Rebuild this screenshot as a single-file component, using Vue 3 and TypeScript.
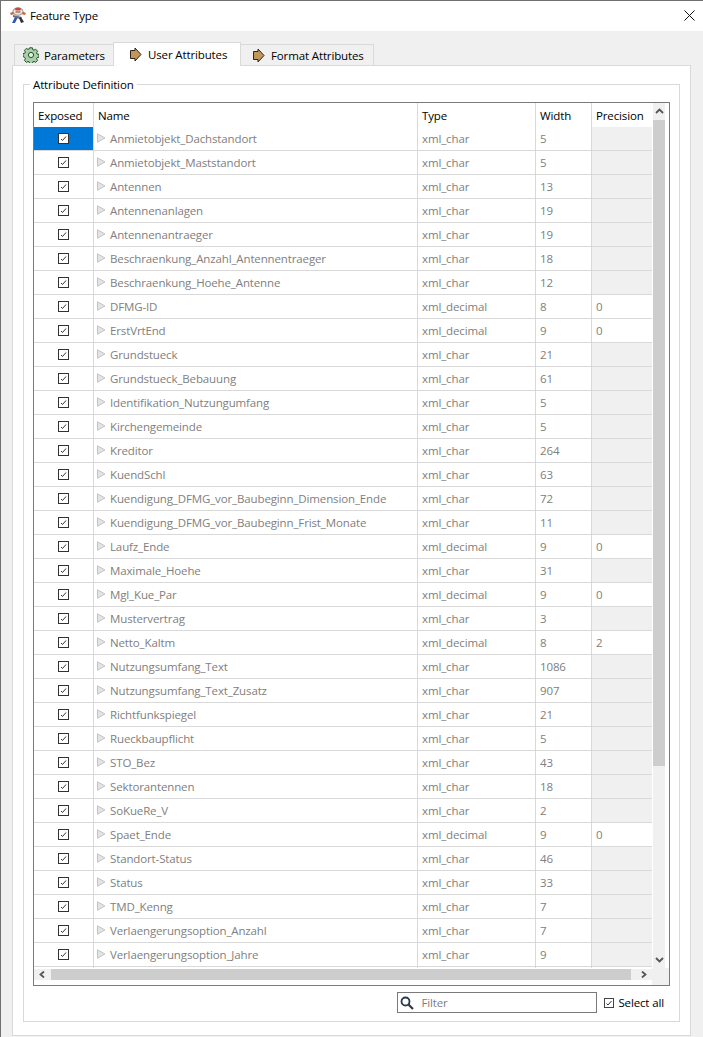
<script setup lang="ts">
interface Attr {
	name: string
	type: 'xml_char' | 'xml_decimal'
	width: number
	precision?: number
}

const rows: Attr[] = [
	{ name: 'Anmietobjekt_Dachstandort', type: 'xml_char', width: 5 },
	{ name: 'Anmietobjekt_Maststandort', type: 'xml_char', width: 5 },
	{ name: 'Antennen', type: 'xml_char', width: 13 },
	{ name: 'Antennenanlagen', type: 'xml_char', width: 19 },
	{ name: 'Antennenantraeger', type: 'xml_char', width: 19 },
	{ name: 'Beschraenkung_Anzahl_Antennentraeger', type: 'xml_char', width: 18 },
	{ name: 'Beschraenkung_Hoehe_Antenne', type: 'xml_char', width: 12 },
	{ name: 'DFMG-ID', type: 'xml_decimal', width: 8, precision: 0 },
	{ name: 'ErstVrtEnd', type: 'xml_decimal', width: 9, precision: 0 },
	{ name: 'Grundstueck', type: 'xml_char', width: 21 },
	{ name: 'Grundstueck_Bebauung', type: 'xml_char', width: 61 },
	{ name: 'Identifikation_Nutzungumfang', type: 'xml_char', width: 5 },
	{ name: 'Kirchengemeinde', type: 'xml_char', width: 5 },
	{ name: 'Kreditor', type: 'xml_char', width: 264 },
	{ name: 'KuendSchl', type: 'xml_char', width: 63 },
	{ name: 'Kuendigung_DFMG_vor_Baubeginn_Dimension_Ende', type: 'xml_char', width: 72 },
	{ name: 'Kuendigung_DFMG_vor_Baubeginn_Frist_Monate', type: 'xml_char', width: 11 },
	{ name: 'Laufz_Ende', type: 'xml_decimal', width: 9, precision: 0 },
	{ name: 'Maximale_Hoehe', type: 'xml_char', width: 31 },
	{ name: 'Mgl_Kue_Par', type: 'xml_decimal', width: 9, precision: 0 },
	{ name: 'Mustervertrag', type: 'xml_char', width: 3 },
	{ name: 'Netto_Kaltm', type: 'xml_decimal', width: 8, precision: 2 },
	{ name: 'Nutzungsumfang_Text', type: 'xml_char', width: 1086 },
	{ name: 'Nutzungsumfang_Text_Zusatz', type: 'xml_char', width: 907 },
	{ name: 'Richtfunkspiegel', type: 'xml_char', width: 21 },
	{ name: 'Rueckbaupflicht', type: 'xml_char', width: 5 },
	{ name: 'STO_Bez', type: 'xml_char', width: 43 },
	{ name: 'Sektorantennen', type: 'xml_char', width: 18 },
	{ name: 'SoKueRe_V', type: 'xml_char', width: 2 },
	{ name: 'Spaet_Ende', type: 'xml_decimal', width: 9, precision: 0 },
	{ name: 'Standort-Status', type: 'xml_char', width: 46 },
	{ name: 'Status', type: 'xml_char', width: 33 },
	{ name: 'TMD_Kenng', type: 'xml_char', width: 7 },
	{ name: 'Verlaengerungsoption_Anzahl', type: 'xml_char', width: 7 },
	{ name: 'Verlaengerungsoption_Jahre', type: 'xml_char', width: 9 },
]
</script>

<template>
	<div class="window">
		<header class="titlebar">
			<svg class="app-icon" width="18" height="18" viewBox="0 0 18 18">
				<path d="M1 7 L6 5 L6 8 L2 9 Z" fill="#d0653a" />
				<path d="M17 7 L12 5 L12 8 L16 9 Z" fill="#d0653a" />
				<ellipse cx="9" cy="5.5" rx="5" ry="3.8" fill="#ece3da" stroke="#8a7468" stroke-width="0.8" />
				<path d="M5.5 3 Q9 0.5 12.5 3 L11 4.5 L7 4.5 Z" fill="#c24a38" />
				<path d="M6.5 6 H11.5" stroke="#6a4a40" stroke-width="1" />
				<path d="M4 9 L13 11 L11 13 L4 11 Z" fill="#6f6f7a" />
				<path d="M6 11 L3 17 L6 17 L8.5 12 Z" fill="#2f55b8" />
				<path d="M10 12 L12 17 L15 16 L12 11 Z" fill="#33333c" />
			</svg>
			<span class="title">Feature Type</span>
			<svg class="close" width="11" height="11" viewBox="0 0 11 11">
				<path d="M0.5 0.5 L10.5 10.5 M10.5 0.5 L0.5 10.5" stroke="#111" stroke-width="1" fill="none" />
			</svg>
		</header>

		<div class="body">
			<nav class="tabs">
				<div class="tab params">
					<svg width="16" height="16" viewBox="0 0 16 16">
						<path
							d="M6.6.8h2.8l.4 1.9 1.2.5 1.6-1 2 2-1 1.6.5 1.2 1.9.4v2.8l-1.9.4-.5 1.2 1 1.6-2 2-1.6-1-1.2.5-.4 1.9H6.6l-.4-1.9-1.2-.5-1.6 1-2-2 1-1.6-.5-1.2L0 9.4V6.6l1.9-.4.5-1.2-1-1.6 2-2 1.6 1 1.2-.5z"
							fill="#a9cfa6"
							stroke="#24502f"
							stroke-width="1"
						/>
						<circle cx="8" cy="8" r="2.6" fill="#e6efe4" stroke="#24502f" stroke-width="1" />
					</svg>
					<span>Parameters</span>
				</div>
				<div class="tab active">
					<svg width="13" height="15" viewBox="0 0 13 15">
						<path d="M1.5 3.5 H6 V1 L12 7.5 L6 14 V11.5 H1.5 Z" fill="#c2955a" stroke="#2d2418" stroke-width="1" />
					</svg>
					<span>User Attributes</span>
				</div>
				<div class="tab format">
					<svg width="13" height="15" viewBox="0 0 13 15">
						<path d="M1.5 3.5 H6 V1 L12 7.5 L6 14 V11.5 H1.5 Z" fill="#c2955a" stroke="#2d2418" stroke-width="1" />
					</svg>
					<span>Format Attributes</span>
				</div>
			</nav>

			<section class="pane">
				<fieldset class="group">
					<legend>Attribute Definition</legend>

					<div class="frame">
						<div class="table-area">
							<div class="row head">
								<div class="cell">Exposed</div>
								<div class="cell">Name</div>
								<div class="cell">Type</div>
								<div class="cell">Width</div>
								<div class="cell last">Precision</div>
							</div>
							<div class="rows">
								<div v-for="(row, i) in rows" :key="row.name" class="row">
									<div class="cell exposed" :class="{ selected: i === 0 }">
										<span class="check">
											<svg width="9" height="9" viewBox="0 0 9 9">
												<path d="M2 5 L3.5 6.5 L7 2.5" stroke="#333" stroke-width="1" fill="none" />
											</svg>
										</span>
									</div>
									<div class="cell name">
										<svg class="arrow" width="9" height="10" viewBox="0 0 9 10">
											<path d="M0.5 0.8 L8 5 L0.5 9.2 Z" fill="#e4e4e4" stroke="#c4c4c4" stroke-width="1" />
										</svg>
										{{ row.name }}
									</div>
									<div class="cell">{{ row.type }}</div>
									<div class="cell">{{ row.width }}</div>
									<div class="cell last" :class="{ shaded: row.precision === undefined }">{{ row.precision }}</div>
								</div>
								<div class="row stub">
									<div class="cell"></div>
									<div class="cell"></div>
									<div class="cell"></div>
									<div class="cell"></div>
									<div class="cell last"></div>
								</div>
							</div>
							<div class="hscroll">
								<span class="sb-btn left">
									<svg width="9" height="7" viewBox="0 0 9 7"><path d="M6 0.5 L2.5 3.5 L6 6.5" stroke="#555" stroke-width="1.8" fill="none" /></svg>
								</span>
								<span class="hthumb"></span>
								<span class="sb-btn right">
									<svg width="9" height="7" viewBox="0 0 9 7"><path d="M3 0.5 L6.5 3.5 L3 6.5" stroke="#555" stroke-width="1.8" fill="none" /></svg>
								</span>
							</div>
						</div>
						<div class="side">
							<div class="vscroll">
								<span class="sb-btn up">
									<svg width="9" height="7" viewBox="0 0 9 7"><path d="M1 5 L4.5 1.5 L8 5" stroke="#555" stroke-width="1.8" fill="none" /></svg>
								</span>
								<span class="vthumb"></span>
								<span class="vtrack"></span>
								<span class="sb-btn down">
									<svg width="9" height="7" viewBox="0 0 9 7"><path d="M1 2 L4.5 5.5 L8 2" stroke="#555" stroke-width="1.8" fill="none" /></svg>
								</span>
							</div>
							<span class="corner"></span>
						</div>
					</div>

					<div class="filter-row">
						<div class="filter">
							<svg width="14" height="14" viewBox="0 0 14 14">
								<circle cx="5.5" cy="5.5" r="4" fill="none" stroke="#2b3a48" stroke-width="1.8" />
								<path d="M8.5 8.5 L13 13" stroke="#2b3a48" stroke-width="2.2" />
							</svg>
							<span class="placeholder">Filter</span>
						</div>
						<label class="select-all">
							<span class="check dark">
								<svg width="8" height="8" viewBox="0 0 8 8">
									<path d="M1.5 4.5 L3 6 L6.5 2" stroke="#333" stroke-width="1" fill="none" />
								</svg>
							</span>
							Select all
						</label>
					</div>
				</fieldset>
			</section>
		</div>
	</div>
</template>

<style>
html,
body {
	margin: 0;
	background: #f0f0f0;
}
</style>

<style scoped>
.window {
	box-sizing: border-box;
	width: 703px;
	height: 1037px;
	overflow: hidden;
	border-top: 1px solid #707070;
	border-left: 1px solid #707070;
	background: #f0f0f0;
	color: #000;
	font-family: 'Open Sans', 'Noto Sans', sans-serif;
	font-size: 11.5px;
	letter-spacing: -0.13px;
}

.titlebar {
	display: flex;
	align-items: center;
	box-sizing: border-box;
	height: 30px;
	padding: 0 8px 2px;
	background: #fff;
}

.app-icon {
	margin-right: 3px;
}

.title {
	flex: 1;
}

.body {
	padding: 12px 0 0 11px;
}

.tabs {
	display: flex;
	align-items: flex-end;
	height: 22px;
	padding-left: 2px;
}

.tab {
	display: flex;
	align-items: center;
	box-sizing: border-box;
	height: 21px;
	border: 1px solid #d9d9d9;
	border-bottom: 0;
	background: #f0f0f0;
}

.tab.params {
	gap: 5px;
	width: 99px;
	padding-left: 8px;
	border-right: 0;
}

.tab.active {
	position: relative;
	z-index: 1;
	gap: 6px;
	width: 128px;
	height: 24px;
	margin-bottom: -1px;
	padding-left: 15px;
	background: #fff;
}

.tab.format {
	gap: 6px;
	width: 133px;
	padding-left: 11px;
	border-left: 0;
}

.pane {
	box-sizing: border-box;
	width: 679px;
	height: 971px;
	padding: 9px 10px 0;
	border: 1px solid #d9d9d9;
	background: #fff;
}

.group {
	box-sizing: border-box;
	width: 657px;
	height: 947px;
	margin: 0;
	padding: 9px 9px 0;
	border: 1px solid #d9d9d9;
}

legend {
	margin-left: -3px;
	padding: 2px 3px 0;
	line-height: 16px;
}

.frame {
	display: flex;
	box-sizing: border-box;
	width: 637px;
	height: 884px;
	border: 1px solid #7a7a7a;
}

.table-area {
	display: flex;
	flex-direction: column;
	width: 618px;
}

.row {
	display: grid;
	grid-template-columns: 60px 324px 118px 56px 60px;
	box-sizing: border-box;
	height: 24px;
	border-bottom: 1px solid #d9d9d9;
	color: #808080;
}

.row.head {
	border-bottom: 0;
	color: #000;
}

.row.stub {
	height: 1px;
	border-bottom: 0;
}

.cell {
	display: flex;
	align-items: center;
	box-sizing: border-box;
	padding-left: 4px;
	border-right: 1px solid #d9d9d9;
	white-space: nowrap;
}

.cell.last {
	border-right: 0;
}

.cell.exposed {
	justify-content: center;
	padding-left: 0;
}

.cell.selected {
	background: #0078d7;
}

.cell.shaded {
	background: #f0f0f0;
}

.cell.name {
	gap: 4px;
}

.arrow {
	margin-top: -1px;
	margin-left: -1px;
}

.check {
	display: flex;
	align-items: center;
	justify-content: center;
	flex: none;
	box-sizing: border-box;
	width: 11px;
	height: 11px;
	border: 1px solid #333;
	background: #fff;
}

.hscroll {
	display: flex;
	height: 11px;
	margin-top: 1px;
	background: #f0f0f0;
}

.sb-btn {
	display: flex;
	align-items: center;
	justify-content: center;
	flex: none;
}

.sb-btn.left {
	width: 17px;
}

.sb-btn.right {
	width: 21px;
	padding-left: 3px;
	box-sizing: border-box;
}

.hthumb {
	flex: 1;
	background: #cdcdcd;
}

.side {
	display: flex;
	flex-direction: column;
	width: 17px;
}

.vscroll {
	display: flex;
	flex-direction: column;
	width: 12px;
	height: 865px;
	margin-left: 1px;
	background: #f0f0f0;
}

.sb-btn.up,
.sb-btn.down {
	height: 17px;
}

.vthumb {
	height: 646px;
	background: #cdcdcd;
}

.vtrack {
	flex: 1;
}

.corner {
	flex: 1;
	background: #f0f0f0;
}

.filter-row {
	display: flex;
	align-items: center;
	justify-content: flex-end;
	gap: 7px;
	margin-top: 6px;
	padding-right: 6px;
}

.filter {
	display: flex;
	align-items: center;
	gap: 7px;
	box-sizing: border-box;
	width: 200px;
	height: 21px;
	padding-left: 2px;
	border: 1px solid #7a7a7a;
	background: #fff;
}

.placeholder {
	color: #808080;
}

.select-all {
	display: flex;
	align-items: center;
	gap: 4px;
}

.check.dark {
	width: 10px;
	height: 10px;
	border-color: #444;
}
</style>
